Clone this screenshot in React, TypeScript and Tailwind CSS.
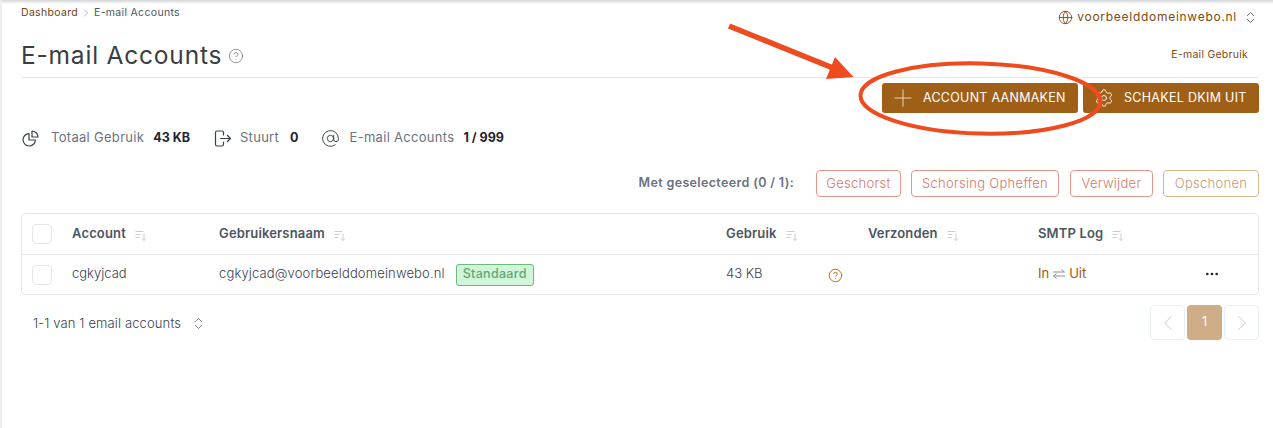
import { AtSign, ChevronLeft, ChevronRight, ChevronsUpDown, CircleHelp, Ellipsis, Globe, Plus, Settings } from "lucide-react";

function SortIcon() {
  return (
    <svg width="12" height="12" viewBox="0 0 12 12" fill="none" stroke="#c9ced6" strokeWidth="1" className="ml-[9px] mt-[2px]">
      <path d="M0.5 2.5h8M0.5 5.5h5M0.5 8.5h4M9 4.5v7M7 9.5l2 2 2-2" />
    </svg>
  );
}

function PieIcon() {
  return (
    <svg width="17" height="17" viewBox="0 0 17 17" fill="none" stroke="#374151" strokeWidth="1.2" strokeLinejoin="round">
      <path d="M7 3.6a6.2 6.2 0 1 0 6.4 6.4H7Z" />
      <path d="M10 1a6 6 0 0 1 6 6h-6Z" />
    </svg>
  );
}

function DoorIcon() {
  return (
    <svg width="17" height="17" viewBox="0 0 17 17" fill="none" stroke="#374151" strokeWidth="1.2" strokeLinecap="round" strokeLinejoin="round">
      <path d="M9.5 5V2.5a1.5 1.5 0 0 0-1.5-1.5H3a1.5 1.5 0 0 0-1.5 1.5v12A1.5 1.5 0 0 0 3 16h5a1.5 1.5 0 0 0 1.5-1.5V12" />
      <path d="M6.5 8.5h10M13.5 5.5l3 3-3 3" />
    </svg>
  );
}

function SwapIcon() {
  return (
    <svg width="12" height="10" viewBox="0 0 12 10" fill="none" stroke="#8b8f96" strokeWidth="1" className="mx-[4px]">
      <path d="M0 3h11.5M8.5 0.5l3 2.5M12 7H0.5M3.5 4.5L0.5 7l3 2.5" />
    </svg>
  );
}

function Stat({ icon, label, value, labelGap, valueGap }: { icon: React.ReactNode; label: string; value: string; labelGap: string; valueGap: string }) {
  return (
    <div className="flex items-center">
      {icon}
      <span className={labelGap + " text-[13px] tracking-[0.3px] text-[#6b7280]"}>{label}</span>
      <span className={valueGap + " text-[12.5px] font-bold text-[#1f2430]"}>{value}</span>
    </div>
  );
}

function BulkButton({ label, tone, width }: { label: string; tone: "red" | "tan"; width: string }) {
  return (
    <button
      className={
        (tone === "red"
          ? "h-[27px] rounded-[4px] border border-[#e8968a] text-[13px] font-light tracking-[0.3px] text-[#d4786a] "
          : "h-[27px] rounded-[4px] border border-[#d8b88e] text-[13px] font-light tracking-[0.3px] text-[#c59c70] ") + width
      }
    >
      {label}
    </button>
  );
}

function HeaderCell({ label }: { label: string }) {
  return (
    <div className="flex items-center text-[13px] font-semibold tracking-[0.15px] text-[#4b5563]">
      {label}
      <SortIcon />
    </div>
  );
}

export default function App() {
  return (
    <div className="relative h-[428px] w-[1273px] overflow-hidden border-l-2 border-[#eceef1] bg-white font-['Inter',sans-serif]">
      <div className="h-[4px] bg-gradient-to-b from-[#d4d6d9] to-white" />
      <div className="pl-[19px] pr-[14px]">
        <div className="flex h-[74px] flex-col border-b border-[#e5e7eb]">
          <div className="flex items-start justify-between">
            <div className="mt-[1px] flex items-center text-[10.5px] tracking-[0.32px]">
              <span className="text-[#70440f]">Dashboard</span>
              <ChevronRight size={12} strokeWidth={1.25} className="mx-[2px] text-[#8b8f96]" />
              <span className="text-[#4b5563]">E-mail Accounts</span>
            </div>
            <div className="mt-[4px] flex items-center text-[#80480f]">
              <Globe size={15} strokeWidth={1.4} />
              <span className="ml-[4px] text-[12px] tracking-[0.72px]">voorbeelddomeinwebo.nl</span>
              <ChevronsUpDown size={15} strokeWidth={1.4} className="ml-[6px] mr-[1px] text-[#555]" />
            </div>
          </div>
          <div className="mt-[14px] flex items-center justify-between">
            <div className="flex items-center">
              <h1 className="text-[24.5px] leading-[30px] tracking-[0.8px] text-[#3a3d42]">E-mail Accounts</h1>
              <CircleHelp size={16} strokeWidth={1.1} className="ml-[6px] mt-[1px] text-[#6b7280]" />
            </div>
            <span className="mr-[11px] text-[10.5px] tracking-[0.25px] text-[#80480f]">E-mail Gebruik</span>
          </div>
        </div>

        <div className="mt-[5px] flex justify-end gap-[5px]">
          <button className="flex h-[30px] w-[196px] items-center rounded-[3px] bg-[#a05f16] pl-[7px] text-[12.5px] tracking-[0.27px] text-white">
            <Plus size={28} strokeWidth={0.9} className="text-[#e6d0b5]" />
            <span className="ml-[6px]">ACCOUNT AANMAKEN</span>
          </button>
          <button className="flex h-[30px] w-[176px] items-center rounded-[3px] bg-[#a05f16] pl-[11px] text-[12.5px] tracking-[0.3px] text-white">
            <Settings size={20} strokeWidth={1.1} />
            <span className="ml-[10px]">SCHAKEL DKIM UIT</span>
          </button>
        </div>

        <div className="mt-[16px] flex h-[18px] items-center gap-[24px] pl-[1px]">
          <Stat icon={<PieIcon />} label="Totaal Gebruik" value="43 KB" labelGap="ml-[12px]" valueGap="ml-[9px]" />
          <Stat icon={<DoorIcon />} label="Stuurt" value="0" labelGap="ml-[9px]" valueGap="ml-[11px]" />
          <Stat icon={<AtSign size={19} strokeWidth={1.2} className="-ml-[2px] -mr-[1px] text-[#374151]" />} label="E-mail Accounts" value="1 / 999" labelGap="ml-[11px]" valueGap="ml-[9px]" />
        </div>

        <div className="mt-[23px] flex items-center justify-end gap-[10px]">
          <span className="mr-[12px] text-[12.5px] font-semibold tracking-[0.35px] text-[#6b7280]">Met geselecteerd (0 / 1):</span>
          <BulkButton label="Geschorst" tone="red" width="w-[85px]" />
          <BulkButton label="Schorsing Opheffen" tone="red" width="w-[148px]" />
          <BulkButton label="Verwijder" tone="red" width="ml-[1px] w-[83px]" />
          <BulkButton label="Opschonen" tone="tan" width="w-[96px]" />
        </div>

        <div className="mt-[16px] rounded-[4px] border border-[#e5e7eb]">
          <div className="grid h-[41px] grid-cols-[40px_147px_507px_142px_170px_1fr] items-center border-b border-[#e5e7eb] pl-[10px]">
            <div className="h-[20px] w-[20px] rounded-[4px] border border-[#e5e7eb]" />
            <HeaderCell label="Account" />
            <HeaderCell label="Gebruikersnaam" />
            <HeaderCell label="Gebruik" />
            <HeaderCell label="Verzonden" />
            <HeaderCell label="SMTP Log" />
          </div>
          <div className="grid h-[39px] grid-cols-[40px_147px_507px_142px_170px_1fr] items-center pl-[10px] text-[13px] font-light text-[#374151]">
            <div className="h-[20px] w-[20px] rounded-[4px] border border-[#e5e7eb]" />
            <div className="pb-[2px]">cgkyjcad</div>
            <div className="flex items-center">
              <span className="pb-[2px] tracking-[0.15px]">cgkyjcad@voorbeelddomeinwebo.nl</span>
              <span className="ml-[11px] flex h-[22px] w-[78px] items-center justify-center rounded-[3px] border border-[#6fb981] bg-[#d1f5d9] text-[12.5px] font-medium tracking-[0.3px] text-[#5fa873]">
                Standaard
              </span>
            </div>
            <div className="flex items-center">
              <span className="w-[102px] pb-[2px]">43 KB</span>
              <CircleHelp size={15} strokeWidth={1.6} className="mt-[2px] text-[#b8741f]" />
            </div>
            <div />
            <div className="flex items-center justify-between pb-[2px] pr-[38px]">
              <div className="flex items-center font-normal text-[#9a5a10]">
                In
                <SwapIcon />
                Uit
              </div>
              <Ellipsis size={16} strokeWidth={2} className="text-[#1f2430]" />
            </div>
          </div>
        </div>

        <div className="mt-[10px] flex items-start justify-between">
          <div className="ml-[12px] mt-[9px] flex items-center text-[13px] font-light tracking-[0.13px] text-[#374151]">
            1-1 van 1 email accounts
            <ChevronsUpDown size={15} strokeWidth={1.1} className="ml-[10px] text-[#555]" />
          </div>
          <div className="flex gap-[2px]">
            <div className="flex h-[35px] w-[35px] items-center justify-center rounded-[4px] border border-[#e8eef7]">
              <ChevronLeft size={26} strokeWidth={0.9} className="text-[#c4c8ce]" />
            </div>
            <div className="flex h-[35px] w-[35px] items-center justify-center rounded-[4px] bg-[#cfae87] text-[12.5px] text-white">1</div>
            <div className="flex h-[35px] w-[35px] items-center justify-center rounded-[4px] border border-[#e8eef7]">
              <ChevronRight size={26} strokeWidth={0.9} className="text-[#c4c8ce]" />
            </div>
          </div>
        </div>
      </div>

      {/* red annotation drawn on top of the screenshot */}
      <svg className="pointer-events-none absolute -left-[2px] top-0" width="1273" height="428" fill="none">
        <ellipse cx="980.5" cy="98.5" rx="120" ry="35" stroke="#ee4b1f" strokeWidth="4" transform="rotate(1.5 980 98)" />
        <path d="M729 26L838 70" stroke="#ee4b1f" strokeWidth="5.5" />
        <path d="M835 57L853.5 77L826 79Z" fill="#ee4b1f" />
      </svg>
    </div>
  );
}
